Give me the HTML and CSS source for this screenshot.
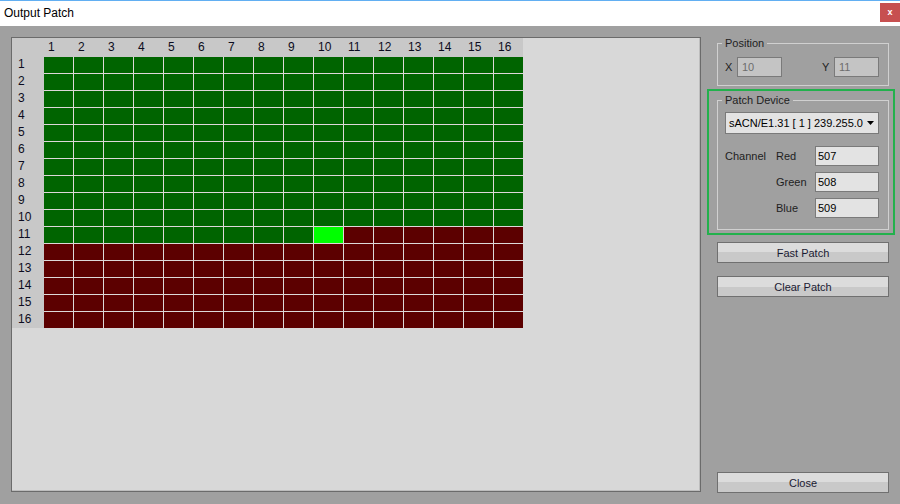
FILE: index.html
```html
<!DOCTYPE html>
<html>
<head>
<meta charset="utf-8">
<title>Output Patch</title>
<link rel="stylesheet" href="styles.css">
</head>
<body>
<div class="window">
  <header class="titlebar">
    <span class="title">Output Patch</span>
    <span class="close">x</span>
  </header>
  <main class="content">
    <section class="patch-panel">
      <div class="patch-grid">
        <div class="corner"></div>
        <div class="col-heads">
          <span>1</span><span>2</span><span>3</span><span>4</span><span>5</span><span>6</span><span>7</span><span>8</span><span>9</span><span>10</span><span>11</span><span>12</span><span>13</span><span>14</span><span>15</span><span>16</span>
        </div>
        <div class="row-heads">
          <span>1</span><span>2</span><span>3</span><span>4</span><span>5</span><span>6</span><span>7</span><span>8</span><span>9</span><span>10</span><span>11</span><span>12</span><span>13</span><span>14</span><span>15</span><span>16</span>
        </div>
        <div class="cells">
          <i></i><i></i><i></i><i></i><i></i><i></i><i></i><i></i><i></i><i></i><i></i><i></i><i></i><i></i><i></i><i></i>
          <i></i><i></i><i></i><i></i><i></i><i></i><i></i><i></i><i></i><i></i><i></i><i></i><i></i><i></i><i></i><i></i>
          <i></i><i></i><i></i><i></i><i></i><i></i><i></i><i></i><i></i><i></i><i></i><i></i><i></i><i></i><i></i><i></i>
          <i></i><i></i><i></i><i></i><i></i><i></i><i></i><i></i><i></i><i></i><i></i><i></i><i></i><i></i><i></i><i></i>
          <i></i><i></i><i></i><i></i><i></i><i></i><i></i><i></i><i></i><i></i><i></i><i></i><i></i><i></i><i></i><i></i>
          <i></i><i></i><i></i><i></i><i></i><i></i><i></i><i></i><i></i><i></i><i></i><i></i><i></i><i></i><i></i><i></i>
          <i></i><i></i><i></i><i></i><i></i><i></i><i></i><i></i><i></i><i></i><i></i><i></i><i></i><i></i><i></i><i></i>
          <i></i><i></i><i></i><i></i><i></i><i></i><i></i><i></i><i></i><i></i><i></i><i></i><i></i><i></i><i></i><i></i>
          <i></i><i></i><i></i><i></i><i></i><i></i><i></i><i></i><i></i><i></i><i></i><i></i><i></i><i></i><i></i><i></i>
          <i></i><i></i><i></i><i></i><i></i><i></i><i></i><i></i><i></i><i></i><i></i><i></i><i></i><i></i><i></i><i></i>
          <i></i><i></i><i></i><i></i><i></i><i></i><i></i><i></i><i></i><i class="on"></i><i class="r"></i><i class="r"></i><i class="r"></i><i class="r"></i><i class="r"></i><i class="r"></i>
          <i class="r"></i><i class="r"></i><i class="r"></i><i class="r"></i><i class="r"></i><i class="r"></i><i class="r"></i><i class="r"></i><i class="r"></i><i class="r"></i><i class="r"></i><i class="r"></i><i class="r"></i><i class="r"></i><i class="r"></i><i class="r"></i>
          <i class="r"></i><i class="r"></i><i class="r"></i><i class="r"></i><i class="r"></i><i class="r"></i><i class="r"></i><i class="r"></i><i class="r"></i><i class="r"></i><i class="r"></i><i class="r"></i><i class="r"></i><i class="r"></i><i class="r"></i><i class="r"></i>
          <i class="r"></i><i class="r"></i><i class="r"></i><i class="r"></i><i class="r"></i><i class="r"></i><i class="r"></i><i class="r"></i><i class="r"></i><i class="r"></i><i class="r"></i><i class="r"></i><i class="r"></i><i class="r"></i><i class="r"></i><i class="r"></i>
          <i class="r"></i><i class="r"></i><i class="r"></i><i class="r"></i><i class="r"></i><i class="r"></i><i class="r"></i><i class="r"></i><i class="r"></i><i class="r"></i><i class="r"></i><i class="r"></i><i class="r"></i><i class="r"></i><i class="r"></i><i class="r"></i>
          <i class="r"></i><i class="r"></i><i class="r"></i><i class="r"></i><i class="r"></i><i class="r"></i><i class="r"></i><i class="r"></i><i class="r"></i><i class="r"></i><i class="r"></i><i class="r"></i><i class="r"></i><i class="r"></i><i class="r"></i><i class="r"></i>
        </div>
      </div>
    </section>
    <aside class="side">
      <fieldset class="group pos">
        <legend>Position</legend>
        <div class="pos-row">
          <div class="pair"><span class="lbl">X</span><div class="field dis">10</div></div>
          <div class="pair"><span class="lbl">Y</span><div class="field dis">11</div></div>
        </div>
      </fieldset>
      <div class="highlight">
        <fieldset class="group device">
          <legend>Patch Device</legend>
          <div class="select">
            <span>sACN/E1.31 [ 1 ] 239.255.0</span>
            <svg class="arrow" width="7" height="4" viewBox="0 0 7 4"><polygon points="0,0 7,0 3.5,4" fill="#000"/></svg>
          </div>
          <div class="channels">
            <span>Channel</span><span>Red</span><div class="field">507</div>
            <span></span><span>Green</span><div class="field">508</div>
            <span></span><span>Blue</span><div class="field">509</div>
          </div>
        </fieldset>
      </div>
      <button class="btn fast">Fast Patch</button>
      <button class="btn clear">Clear Patch</button>
      <button class="btn close-btn">Close</button>
    </aside>
  </main>
</div>
</body>
</html>
```
FILE: styles.css
```css
* { box-sizing: border-box; }

body {
  margin: 0;
  width: 900px;
  height: 504px;
  overflow: hidden;
  background: #a0a0a0;
  font-family: "Liberation Sans", Arial, sans-serif;
  font-size: 11px;
  color: #1e1e1e;
}

.titlebar {
  height: 26px;
  background: #fff;
  border-top: 1px solid #62aff2;
  display: flex;
  align-items: center;
  justify-content: space-between;
  padding-left: 4px;
}

.title {
  font-size: 12px;
  line-height: 14px;
  color: #000;
  margin-bottom: 2px;
}

.close {
  align-self: flex-start;
  margin-top: 2px;
  width: 20px;
  height: 19px;
  background: #c75050;
  color: #fff;
  font-weight: bold;
  font-size: 9px;
  line-height: 18px;
  text-align: center;
}

.content {
  display: flex;
  padding: 11px 0 0 11px;
  height: 478px;
}

.patch-panel {
  width: 690px;
  height: 455px;
  background: #d8d8d8;
  border: 1px solid #6b6b6b;
  box-shadow: inset -1px -1px 0 #bdbdbd;
}

.patch-grid {
  display: grid;
  grid-template-columns: 32px 479px;
  grid-template-rows: 19px 271px;
  width: 511px;
  background: #c8c8c8;
  color: #0c0c20;
  font-size: 12px;
}

.col-heads {
  display: grid;
  grid-template-columns: repeat(16, 29px);
  column-gap: 1px;
  line-height: 19px;
}

.col-heads span { padding-left: 4px; }

.row-heads {
  display: grid;
  grid-template-rows: repeat(16, 16px);
  row-gap: 1px;
  line-height: 14px;
  padding-left: 6px;
}

.cells {
  display: grid;
  grid-template-columns: repeat(16, 29px);
  grid-template-rows: repeat(16, 16px);
  gap: 1px;
  background: #ddd8d8;
}

.cells i { background: #006400; }
.cells i.r { background: #5c0000; }
.cells i.on { background: #00ff00; }

.side {
  margin-left: 6px;
  width: 188px;
  height: 456px;
  display: flex;
  flex-direction: column;
}

.group {
  margin: 0 0 0 10px;
  width: 172px;
  min-width: 0;
  border: 1px solid #d0d0d0;
  padding: 7px 9px 8px 7px;
}

.group legend {
  padding: 0 3px;
  margin-left: -3px;
  line-height: 13px;
  font-size: 11px;
}

.pos-row {
  display: flex;
  justify-content: space-between;
}

.pair {
  display: flex;
  align-items: center;
}

.pair .lbl { width: 12px; }

.field {
  height: 20px;
  border: 1px solid #7a7a7a;
  background: #e3e3e3;
  line-height: 18px;
  padding-left: 2px;
  color: #000;
}

.field.dis {
  width: 45px;
  background: #c4c4c4;
  color: #6d6d6d;
  padding-left: 4px;
}

.highlight {
  margin-top: 3px;
  width: 188px;
  border: 2px solid #22b14c;
  padding: 3px 4px 3px 8px;
}

.highlight .group {
  margin-left: 0;
  padding-top: 0;
  padding-bottom: 11px;
}

.select {
  margin-top: 5px;
  height: 22px;
  border: 1px solid #7a7a7a;
  background: #e3e3e3;
  display: flex;
  align-items: center;
  justify-content: space-between;
  padding: 0 4px 0 3px;
  color: #000;
}

.arrow { display: block; }

.channels {
  margin-top: 12px;
  display: grid;
  grid-template-columns: 51px 39px 64px;
  grid-template-rows: repeat(3, 20px);
  row-gap: 6px;
  align-items: center;
}

.btn {
  margin: 7px 0 0 10px;
  width: 172px;
  height: 21px;
  padding: 0;
  border: 1px solid #707070;
  background: linear-gradient(#dcdcdc 50%, #c9c9c9 50%);
  font-family: "Liberation Sans", Arial, sans-serif;
  font-size: 11px;
  color: #1b1b33;
}

.btn.clear { margin-top: 13px; }
.btn.close-btn { margin-top: auto; }
```
